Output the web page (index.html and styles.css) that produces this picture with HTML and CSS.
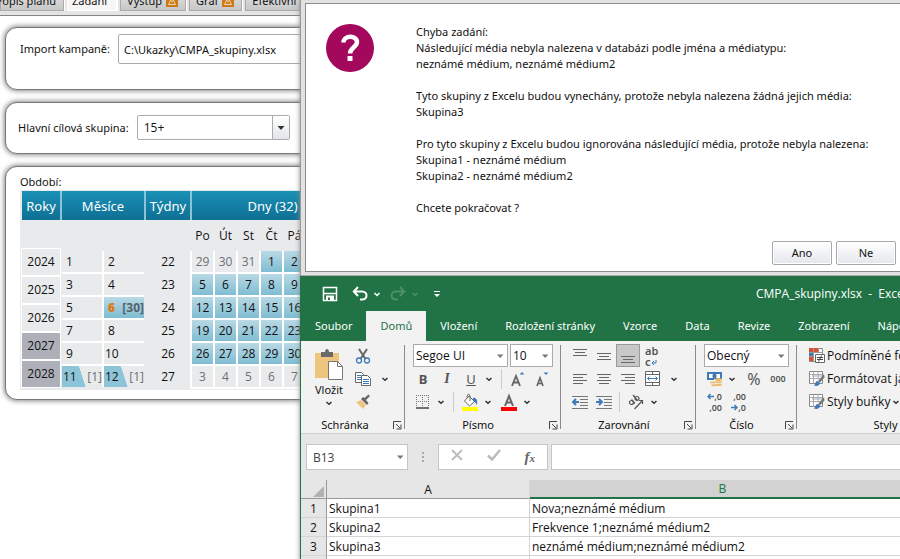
FILE: index.html
```html
<!DOCTYPE html>
<html lang="cs">
<head>
<meta charset="utf-8">
<title>Zadání kampaně</title>
<link rel="stylesheet" href="styles.css">
</head>
<body>
<svg width="0" height="0" class="defs" aria-hidden="true">
  <symbol id="chev" viewBox="0 0 8 8"><path d="M1.500 3 4 5.300 6.500 3" fill="none" stroke="#333" stroke-width="1.500"/></symbol>
  <symbol id="tri" viewBox="0 0 8 8"><path d="M1 2.500h6.500L4.200 6z" fill="#777"/></symbol>
  <symbol id="launch" viewBox="0 0 9 9"><path d="M.5 8V.5H8M3 3l4 4M8 3.500V8H3.500" fill="none" stroke="#444"/></symbol>
  <symbol id="warn" viewBox="0 0 12 12"><path d="M0 0h12v12H0z" fill="#cb7a1a"/><path d="M6 2.500 9.500 9.500h-7zM6 5v2.500" fill="none" stroke="#f3d3a6"/></symbol>
  <symbol id="tablebrush" viewBox="0 0 17 17"><path d="M1.500 1.500h13v12h-13z" fill="#fff" stroke="#888"/><path d="M4 4h10v3H4z" fill="#c9d7e6"/><path d="M1.500 4.500h13M1.500 8.500h13M5.500 1.500v12M10 1.500v8" fill="none" stroke="#aaa"/><path d="m16 4-6 7 2 1.500 4.500-5z" fill="#777"/><path d="M9.500 11c-2 0-2 3-3.500 4.500 3 1 6 0 6-3z" fill="#3f7ab8"/></symbol>
</svg>
<div class="desktop">
  <main class="app">
    <nav class="tabs">
      <a class="tab first" href="#">Popis plánu</a>
      <a class="tab active" href="#">Zadání</a>
      <a class="tab" href="#">Výstup <svg class="warn"><use href="#warn"/></svg></a>
      <a class="tab" href="#">Graf <svg class="warn"><use href="#warn"/></svg></a>
      <a class="tab" href="#">Efektivní re</a>
    </nav>
    <section class="panel import">
      <label for="path">Import kampaně:</label>
      <input id="path" class="path" value="C:\Ukazky\CMPA_skupiny.xlsx">
    </section>
    <section class="panel target">
      <label for="group">Hlavní cílová skupina:</label>
      <span class="combo big"><select id="group"><option>15+</option></select><span class="drop"><svg width="10" height="10" viewBox="0 0 10 10"><path d="M1.500 3h7L5 7z" fill="#333"/></svg></span></span>
    </section>
    <section class="panel period">
      <div class="period-title">Období:</div>
      <div class="calendar">
        <div class="col years"><h2>Roky</h2><div class="sub short"></div>
          <button>2024</button><button>2025</button><button>2026</button><button class="off">2027</button><button class="off">2028</button>
        </div>
        <div class="col months"><h2>Měsíce</h2><div class="sub"></div>
          <div class="month-grid">
            <button>1</button><button>2</button><button>3</button><button>4</button><button>5</button>
            <button class="sel"><b>6</b><span>[30]</span></button>
            <button>7</button><button>8</button><button>9</button><button class="wide">10</button>
            <button class="part">11<span>[1]</span></button><button class="part">12<span>[1]</span></button>
          </div>
        </div>
        <div class="col weeks"><h2>Týdny</h2><div class="sub"></div>
          <button>22</button><button>23</button><button>24</button><button>25</button><button>26</button><button>27</button>
        </div>
        <div class="col days"><h2>Dny (32)</h2>
          <table>
            <thead><tr><th>Po</th><th>Út</th><th>St</th><th>Čt</th><th>Pá</th></tr></thead>
            <tbody>
              <tr><td class="out">29</td><td class="out">30</td><td class="out">31</td><td>1</td><td>2</td></tr>
              <tr><td>5</td><td>6</td><td>7</td><td>8</td><td>9</td></tr>
              <tr><td>12</td><td>13</td><td>14</td><td>15</td><td>16</td></tr>
              <tr><td>19</td><td>20</td><td>21</td><td>22</td><td>23</td></tr>
              <tr><td>26</td><td>27</td><td>28</td><td>29</td><td>30</td></tr>
              <tr><td class="out">3</td><td class="out">4</td><td class="out">5</td><td class="out">6</td><td class="out">7</td></tr>
            </tbody>
          </table>
        </div>
      </div>
    </section>
  </main>

  <div class="front">
    <section class="dialog" role="dialog" aria-label="Chyba zadání">
      <div class="dialog-inner">
        <div class="message">
          <svg class="question" width="48" height="48" viewBox="0 0 48 48"><circle cx="24" cy="24" r="24" fill="#a3085c"/><path d="M17.500 18.500c0-7.500 13.500-7.500 13.500-.5 0 5-7 5.500-7 11.500" fill="none" stroke="#fff" stroke-width="4.500"/><path d="M21.500 32h5v5h-5z" fill="#fff"/></svg>
          <div class="lines">
            <p>Chyba zadání:<br>Následující média nebyla nalezena v databázi podle jména a médiatypu:<br>neznámé médium, neznámé médium2</p>
            <p>Tyto skupiny z Excelu budou vynechány, protože nebyla nalezena žádná jejich média:<br>Skupina3</p>
            <p>Pro tyto skupiny z Excelu budou ignorována následující média, protože nebyla nalezena:<br>Skupina1 - neznámé médium<br>Skupina2 - neznámé médium2</p>
            <p>Chcete pokračovat ?</p>
          </div>
        </div>
        <div class="actions"><button>Ano</button><button>Ne</button></div>
      </div>
    </section>

    <section class="excel">
      <header class="titlebar">
        <button aria-label="Uložit"><svg width="16" height="16" viewBox="0 0 16 16"><path d="M1.500 1.500h13v13h-13z" fill="none" stroke="#fff" stroke-width="1.500"/><path d="M4 9.500h8V15H4z" fill="#fff"/><path d="M6 11.500h2V14H6z" fill="#217346"/><path d="M2 7.500h12" stroke="#fff" stroke-width="1.500"/></svg></button>
        <button class="undo" aria-label="Zpět"><svg width="16" height="16" viewBox="0 0 16 16"><path d="M2 5.500h8c6 0 6 8 0 8H8M6 1 1.800 5.500 6 10" fill="none" stroke="#fff" stroke-width="2"/></svg><svg class="c" width="8" height="8" viewBox="0 0 8 8"><path d="M1.500 3 4 5.500 6.500 3" fill="none" stroke="#fff" stroke-width="1.500"/></svg></button>
        <button class="redo" aria-label="Znovu"><svg width="16" height="16" viewBox="0 0 16 16"><path d="M14 5.500H6c-6 0-6 8 0 8h2M10 1l4.200 4.500L10 10" fill="none" stroke="#4d9068" stroke-width="2"/></svg><svg class="c" width="8" height="8" viewBox="0 0 8 8"><path d="M1.500 3 4 5.500 6.500 3" fill="none" stroke="#4d9068" stroke-width="1.500"/></svg></button>
        <button class="more" aria-label="Přizpůsobit"><svg width="8" height="8" viewBox="0 0 8 8"><path d="M1 1.500h6" stroke="#fff"/><path d="M1 4h6L4 7z" fill="#fff"/></svg></button>
        <span class="title">CMPA_skupiny.xlsx&nbsp; -&nbsp; Excel</span>
      </header>
      <nav class="ribbon-tabs">
        <a href="#">Soubor</a><a href="#" class="active">Domů</a><a href="#">Vložení</a><a href="#">Rozložení stránky</a><a href="#">Vzorce</a><a href="#">Data</a><a href="#">Revize</a><a href="#">Zobrazení</a><a href="#">Nápověda</a>
      </nav>
      <div class="ribbon">
        <div class="group clipboard">
          <div class="clip-body">
            <button class="paste">
              <svg width="30" height="32" viewBox="0 0 30 32"><path d="M1 4h24v25H1z" fill="#edc57c"/><path d="M7 3h4c0-4 4-4 4 0h4v5H7z" fill="#6a6a6a"/><path d="M14.500 12.500h9l5 5v13h-14z" fill="#fff" stroke="#777"/><path d="M23.500 12.500v5h5" fill="none" stroke="#777"/></svg>
              <span>Vložit</span><svg width="8" height="8"><use href="#chev"/></svg>
            </button>
            <div class="clip-side">
              <div class="row"><button class="tool" aria-label="Vyjmout"><svg width="16" height="16" viewBox="0 0 16 16"><path d="m4 1 6.500 10M12 1 5.500 11" stroke="#666" stroke-width="2"/><circle cx="4" cy="12.500" r="2.500" fill="none" stroke="#3f7ab8" stroke-width="1.300"/><circle cx="12" cy="12.500" r="2.500" fill="none" stroke="#3f7ab8" stroke-width="1.300"/></svg></button></div>
              <div class="row"><button class="tool" aria-label="Kopírovat"><svg width="16" height="16" viewBox="0 0 16 16"><path d="M.5 1.500h6l2 2v8h-8z" fill="#fff" stroke="#666"/><path d="M2 4.500h4M2 6.500h4M2 8.500h4" stroke="#3f7ab8"/><path d="M6.500 4.500h6l3 3v7h-9z" fill="#fff" stroke="#666"/><path d="M8 8.500h6M8 10.500h6M8 12.500h6" stroke="#3f7ab8"/></svg></button><button class="ch" aria-label="Možnosti kopírování"><svg width="8" height="8"><use href="#chev"/></svg></button></div>
              <div class="row"><button class="tool" aria-label="Kopírovat formát"><svg width="16" height="16" viewBox="0 0 16 16"><path d="m1 8 5-2 5 5-3 4z" fill="#edc57c"/><path d="m6 5 6 6 1.500-2L11 6l4-4-1.500-1.500L9.500 4 8 3z" fill="#666"/></svg></button></div>
            </div>
          </div>
          <div class="caption">Schránka<svg class="launch"><use href="#launch"/></svg></div>
        </div>

        <div class="group font">
          <div class="row">
            <span class="combo face"><select aria-label="Písmo"><option>Segoe UI</option></select><svg class="arrow"><use href="#tri"/></svg></span>
            <span class="combo size"><select aria-label="Velikost písma"><option>10</option></select><svg class="arrow"><use href="#tri"/></svg></span>
          </div>
          <div class="row">
            <button class="tool letter"><b>B</b></button><button class="tool letter serif"><i>I</i></button><button class="tool letter"><u>U</u></button><button class="ch" aria-label="Podtržení"><svg width="8" height="8"><use href="#chev"/></svg></button><i class="sep"></i>
            <button class="tool" aria-label="Zvětšit písmo"><svg width="16" height="16" viewBox="0 0 16 16"><path d="m2 15 4-10 4 10M3.500 11.500h5" fill="none" stroke="#666" stroke-width="1.800"/><path d="M9.500 3.500h5L12 1z" fill="#3f7ab8"/></svg></button>
            <button class="tool" aria-label="Zmenšit písmo"><svg width="16" height="16" viewBox="0 0 16 16"><path d="m3 15 3-8 3 8M4 12.500h4" fill="none" stroke="#666" stroke-width="1.700"/><path d="M9.500 1.500h5L12 4z" fill="#3f7ab8"/></svg></button>
          </div>
          <div class="row">
            <button class="tool" aria-label="Ohraničení"><svg width="14" height="14" viewBox="0 0 14 14"><path d="M0 .5h14M0 6.500h14M.5 0v12M6.500 0v12M12.500 0v12" stroke="#777" stroke-dasharray="1 1"/><path d="M0 13h13" stroke="#444" stroke-width="1.500"/></svg></button><button class="ch" aria-label="Možnosti ohraničení"><svg width="8" height="8"><use href="#chev"/></svg></button><i class="sep"></i>
            <button class="tool" aria-label="Barva výplně"><svg width="16" height="18" viewBox="0 0 16 18"><path d="m7 3 5.500 5.500L7.500 13 2.500 8z" fill="#fff" stroke="#666"/><path d="M5 5c0-5 3-5 3-1v4" fill="none" stroke="#666"/><path d="M11 5c3-1 5 2 4 7-1-1-1-3-4-4z" fill="#3f7ab8"/><path d="M0 14h16v4H0z" fill="#ff0"/></svg></button><button class="ch" aria-label="Barvy výplně"><svg width="8" height="8"><use href="#chev"/></svg></button>
            <button class="tool color" aria-label="Barva písma"><svg width="16" height="18" viewBox="0 0 16 18"><path d="m4 13 4-10 4 10M5.500 9.500h5" fill="none" stroke="#666" stroke-width="2"/><path d="M0 14h16v4H0z" fill="#f00"/></svg></button><button class="ch" aria-label="Barvy písma"><svg width="8" height="8"><use href="#chev"/></svg></button>
          </div>
          <div class="caption">Písmo<svg class="launch"><use href="#launch"/></svg></div>
        </div>

        <div class="group align">
          <div class="row">
            <button class="tool" aria-label="Nahoru"><svg width="14" height="16" viewBox="0 0 14 16"><path d="M0 1.500h14M2 4.500h10M0 7.500h14" stroke="#666"/></svg></button>
            <button class="tool" aria-label="Na střed svisle"><svg width="14" height="16" viewBox="0 0 14 16"><path d="M0 5.500h14M2 8.500h10M0 11.500h14" stroke="#666"/></svg></button>
            <button class="tool pressed" aria-label="Dolů"><svg width="14" height="16" viewBox="0 0 14 16"><path d="M0 8.500h14M2 11.500h10M0 14.500h14" stroke="#666"/></svg></button>
            <button class="tool wrap" aria-label="Zalamovat text"><span>ab</span><span>c<svg width="6" height="6" viewBox="0 0 6 6"><path d="M5 0v3H1M3 1 1 3l2 2" fill="none" stroke="#3f7ab8"/></svg></span></button>
          </div>
          <div class="row">
            <button class="tool" aria-label="Vlevo"><svg width="14" height="12" viewBox="0 0 14 12"><path d="M0 1.500h14M0 4.500h10M0 7.500h14M0 10.500h10" stroke="#666"/></svg></button>
            <button class="tool" aria-label="Na střed"><svg width="14" height="12" viewBox="0 0 14 12"><path d="M0 1.500h14M2 4.500h10M0 7.500h14M2 10.500h10" stroke="#666"/></svg></button>
            <button class="tool" aria-label="Vpravo"><svg width="14" height="12" viewBox="0 0 14 12"><path d="M0 1.500h14M4 4.500h10M0 7.500h14M4 10.500h10" stroke="#666"/></svg></button>
            <button class="tool" aria-label="Sloučit"><svg width="15" height="15" viewBox="0 0 15 15"><path d="M.5.5h14v14H.5zM.5 3.500h14M.5 11.500h14M7.500 0v3.500M7.500 11.500V15" fill="#fff" stroke="#666"/><path d="M2.500 7.500h10M4.500 5.500l-2 2 2 2M10.500 5.500l2 2-2 2" fill="none" stroke="#3f7ab8"/></svg></button><button class="ch far" aria-label="Možnosti sloučení"><svg width="8" height="8"><use href="#chev"/></svg></button>
          </div>
          <div class="row">
            <button class="tool" aria-label="Zmenšit odsazení"><svg width="16" height="14" viewBox="0 0 16 14"><path d="M0 1.500h16M8 4.500h8M8 7.500h8M8 10.500h8M0 13.500h16" stroke="#777"/><path d="M1 7h6M4 4 1 7l3 3" fill="none" stroke="#3f7ab8" stroke-width="2"/></svg></button>
            <button class="tool" aria-label="Zvětšit odsazení"><svg width="16" height="14" viewBox="0 0 16 14"><path d="M0 1.500h16M8 4.500h8M8 7.500h8M8 10.500h8M0 13.500h16" stroke="#777"/><path d="M0 7h6M3 4l3 3-3 3" fill="none" stroke="#3f7ab8" stroke-width="2"/></svg></button><i class="sep near"></i>
            <button class="tool" aria-label="Orientace"><svg width="16" height="16" viewBox="0 0 16 16"><g fill="none" stroke="#555" stroke-width="1.200"><circle cx="3.500" cy="8.500" r="2"/><path d="m3.500 5.500 3.500 4M5 1l4.500 5.500"/><circle cx="9" cy="4.500" r="2"/><path d="m6.500 15 8-8.500M11 6.500h3.500V10"/></g></svg></button><button class="ch" aria-label="Možnosti orientace"><svg width="8" height="8"><use href="#chev"/></svg></button>
          </div>
          <div class="caption">Zarovnání<svg class="launch"><use href="#launch"/></svg></div>
        </div>

        <div class="group number">
          <div class="row"><span class="combo format"><select aria-label="Formát čísla"><option>Obecný</option></select><svg class="arrow"><use href="#tri"/></svg></span></div>
          <div class="row">
            <button class="tool" aria-label="Měna"><svg width="17" height="16" viewBox="0 0 17 16"><path d="M1 1h15v8H1z" fill="#3f7ab8"/><path d="M3 3h11v4H3z" fill="#fff"/><circle cx="8.500" cy="5" r="2.200" fill="#3f7ab8"/><path d="M8 8h8v7H8zM4 11h7v4H4z" fill="#f2f2f2"/><g fill="#edb96a"><ellipse cx="12.500" cy="8.500" rx="3.500" ry="1.500"/><ellipse cx="12.500" cy="11.300" rx="3.500" ry="1"/><ellipse cx="12.500" cy="14" rx="3.500" ry="1"/><ellipse cx="7" cy="11.500" rx="3" ry="1"/><ellipse cx="8" cy="14.300" rx="3" ry="1"/></g></svg></button><button class="ch" aria-label="Možnosti měny"><svg width="8" height="8"><use href="#chev"/></svg></button>
            <button class="tool percent">%</button><button class="tool zeros">000</button>
          </div>
          <div class="row">
            <button class="tool dec"><span><svg width="7" height="7" viewBox="0 0 7 7"><path d="M1 3.500h6M3.500 1 1 3.500 3.500 6" fill="none" stroke="#3f7ab8" stroke-width="1.500"/></svg>,0</span><span>,00</span></button>
            <button class="tool dec"><span>,00</span><span><svg width="7" height="7" viewBox="0 0 7 7"><path d="M0 3.500h6M3.500 1 6 3.500 3.500 6" fill="none" stroke="#3f7ab8" stroke-width="1.500"/></svg>,0</span></button>
          </div>
          <div class="caption">Číslo<svg class="launch"><use href="#launch"/></svg></div>
        </div>

        <div class="group styles">
          <div class="row"><button class="named"><svg width="17" height="17" viewBox="0 0 17 17"><path d="M1.500 1.500h13v13h-13z" fill="#fff" stroke="#888"/><path d="M1 1h9v4H1zM1 10h5v4H1z" fill="#d8502f"/><path d="M1 6h4v3H1z" fill="#3f7ab8"/><path d="M5.500 1v14M10.500 1v5M1 5.500h14M1 9.500h5" stroke="#999"/><path d="M7.500 7.500h9v8h-9z" fill="#fff" stroke="#666"/><path d="M9 10.500h6M9 12.500h6M13.500 8.500l-3 6" stroke="#444"/></svg>Podmíněné formátování</button></div>
          <div class="row"><button class="named"><svg width="17" height="17"><use href="#tablebrush"/></svg>Formátovat jako tabulku</button></div>
          <div class="row"><button class="named"><svg width="17" height="17"><use href="#tablebrush"/></svg>Styly buňky<svg width="8" height="8"><use href="#chev"/></svg></button></div>
          <div class="caption">Styly</div>
        </div>
      </div>

      <div class="formula">
        <span class="combo name"><input aria-label="Pole názvů" value="B13"><svg class="arrow"><use href="#tri"/></svg></span>
        <svg class="dots" width="2" height="12" viewBox="0 0 2 12"><path d="M0 1h2v2H0zM0 5h2v2H0zM0 9h2v2H0z" fill="#aaa"/></svg>
        <div class="fx">
          <button aria-label="Zrušit"><svg width="12" height="12" viewBox="0 0 12 12"><path d="m1 1 10 10M11 1 1 11" stroke="#bbb" stroke-width="1.800"/></svg></button>
          <button aria-label="Zadat"><svg width="14" height="12" viewBox="0 0 14 12"><path d="m1 6.500 4 4L13 1" fill="none" stroke="#bbb" stroke-width="2.500"/></svg></button>
          <button class="fn">f<small>x</small></button>
        </div>
        <input class="entry" aria-label="Řádek vzorců">
      </div>
      <table class="sheet">
        <colgroup><col class="c0"><col class="c1"><col class="c2"></colgroup>
        <thead><tr><th class="corner"><svg width="11" height="11" viewBox="0 0 11 11"><path d="M11 0v11H0z" fill="#b2b2b2"/></svg></th><th>A</th><th class="current">B</th></tr></thead>
        <tbody>
          <tr><th>1</th><td>Skupina1</td><td>Nova;neznámé médium</td></tr>
          <tr><th>2</th><td>Skupina2</td><td>Frekvence 1;neznámé médium2</td></tr>
          <tr><th>3</th><td>Skupina3</td><td>neznámé médium;neznámé médium2</td></tr>
          <tr><th></th><td></td><td></td></tr>
        </tbody>
      </table>
    </section>
  </div>
</div>
</body>
</html>
```

FILE: styles.css
```css
* { box-sizing: border-box; }

body {
  margin: 0;
  background: #fff;
  color: #111;
  font: 11px/16px "Noto Sans", "Open Sans", sans-serif;
  overflow: hidden;
}

button, input, select { font: inherit; color: inherit; }
button { padding: 0; border: 0; background: none; white-space: nowrap; }
a { color: inherit; text-decoration: none; }
svg { flex: none; }
.defs { position: absolute; }

.desktop {
  display: grid;
  grid-template-columns: 300px minmax(0, 1fr);
  height: 100vh;
}

/* Planning application */
.app { overflow: hidden; white-space: nowrap; }

.tabs {
  display: flex;
  align-items: flex-end;
  gap: 3px;
  height: 16px;
  padding-bottom: 4px;
  overflow: hidden;
  background: #e4e4e4;
  border-bottom: 1px solid #858585;
}

.tab {
  display: flex;
  align-items: center;
  gap: 4px;
  flex: none;
  height: 20px;
  padding: 0 7px 0 6px;
  background: linear-gradient(#e6e6e6, #c6c6c6);
  border: 1px solid #aaa;
  border-top: 0;
  box-shadow: 1px 0 #fff;
}

.tab.first { width: 64px; justify-content: flex-end; }
.tab.active { background: #f6f6f6; border-color: #fff; padding: 0 9px 0 4px; }
.warn { width: 12px; height: 12px; }

.panel {
  width: 400px;
  margin: 12px 0 0 5px;
  border: 1px solid #777;
  border-radius: 12px;
  background: #fff;
  box-shadow: 0 0 5px 1px #888;
}

.panel.import { display: flex; align-items: flex-start; gap: 8px; height: 63px; margin-top: 11px; padding: 6px 0 0 14px; }
.import label { line-height: 30px; }

.path {
  width: 300px;
  height: 30px;
  padding: 0 5px;
  border: 1px solid #aaa;
  border-radius: 2px;
}

.panel.target { display: flex; align-items: flex-start; gap: 8px; height: 52px; padding: 12px 0 0 12px; }
.target label { line-height: 25px; }

.combo {
  display: flex;
  align-items: center;
  background: #fff;
  border: 1px solid #ababab;
  font-size: 12px;
  font-family: "Open Sans", "Noto Sans", sans-serif;
}

.combo select, .combo input {
  flex: 1;
  min-width: 0;
  height: 100%;
  padding: 0 2px;
  border: 0;
  background: none;
  appearance: none;
  outline: 0;
}

.arrow { width: 8px; height: 8px; margin-right: 3px; }
.combo.big { width: 153px; height: 25px; border-radius: 2px; }
.combo.big select { padding-left: 6px; }

.drop {
  display: flex;
  align-items: center;
  justify-content: center;
  width: 17px;
  height: 100%;
  border-left: 1px solid #aaa;
  background: linear-gradient(#fff, #e2e6ea);
}

.panel.period { padding: 7px 14px 9px; }

.calendar {
  display: flex;
  width: 334px;
  gap: 2px;
  padding: 1px 0 1px 2px;
  background: #e9eaec;
  font-size: 12px;
  font-family: "Open Sans", "Noto Sans", sans-serif;
}

.calendar button { display: block; height: 21px; background: #e9eaec; line-height: 21px; }

.col h2 {
  height: 29px;
  margin: 0;
  background: linear-gradient(#1990b5, #0f6f94);
  box-shadow: 2px 0 #8cc3d6;
  color: #fff;
  font: 13px/31px "Noto Sans", "Open Sans", sans-serif;
  text-align: center;
}

.sub { height: 31px; }
.sub.short { height: 29px; }
.years { width: 38px; }
.years button { width: 38px; height: 26px; margin-bottom: 2px; line-height: 26px; box-shadow: 0 0 0 1px #fff; }
.calendar .years .off { background: #adb0b9; }
.months { width: 82px; }
.month-grid { display: grid; grid-template-columns: 40px 40px; gap: 2px; background: #fff; }
.calendar .months button { display: flex; justify-content: space-between; padding-left: 4px; text-align: left; }
.calendar .months .wide { padding-left: 1px; }
.calendar .months .sel { background: linear-gradient(#b9d9e5, #7fbdd2); color: #56616a; font-weight: 700; }
.sel b { color: #dd7a16; }
.calendar .months .part { padding-left: 1px; background: linear-gradient(72deg, #8cc5d8 0 50%, #e9eaec 51%); }
.part span { color: #6c6f76; }
.weeks { width: 44px; }
.weeks button { width: 44px; margin-bottom: 2px; }
.days { width: 161px; }
.days table { margin-left: -2px; border-spacing: 2px 2px; table-layout: fixed; width: 117px; background: #fff; }
.days th { height: 27px; padding: 0; font-weight: 400; background: #e9eaec; box-shadow: 0 0 0 2px #e9eaec; }
.days td { height: 21px; padding: 0; line-height: 21px; text-align: center; background: linear-gradient(#b9d9e5, #7fbdd2); }
.days .out { background: #e9eaec; color: #6c6f76; }

/* Windows in front */
.front { position: relative; min-width: 0; box-shadow: 0 0 5px #888; }

.dialog {
  padding: 3px 0 3px 4px;
  background: #e2e2e2;
  border-left: 1px solid #999;
  border-bottom: 1px solid #aaa;
}

.dialog-inner {
  height: 269px;
  display: flex;
  flex-direction: column;
  justify-content: space-between;
  border: 1px solid #8d8b8d;
  border-right: 0;
  background: #fff;
  padding: 20px 4px 6px 20px;
}

.message { display: flex; gap: 42px; white-space: nowrap; }
.lines p { margin: 0 0 16px; }
.actions { display: flex; justify-content: flex-end; gap: 4px; }

.actions button {
  width: 60px;
  height: 24px;
  border: 1px solid #a8a8a8;
  border-radius: 2px;
  background: linear-gradient(#fff, #e3e7eb);
  box-shadow: inset 0 0 0 1px #fff;
}

/* Spreadsheet */
.excel { border-left: 1px solid #217346; background: #fff; overflow: hidden; white-space: nowrap; }

.titlebar {
  display: flex;
  align-items: center;
  height: 35px;
  padding-left: 21px;
  background: #217346;
  color: #fff;
}

.titlebar button { display: flex; align-items: center; gap: 5px; }
.titlebar .undo { margin-left: 14px; }
.titlebar .redo { margin-left: 9px; }
.titlebar .more { margin-left: 14px; }
.titlebar .title { margin-left: 315px; font-size: 12px; font-family: "Open Sans", "Noto Sans", sans-serif; }

.ribbon-tabs { display: flex; height: 30px; background: #217346; color: #fff; line-height: 30px; }
.ribbon-tabs a { padding: 0 14px; }
.ribbon-tabs .active { background: #f2f2f2; color: #217346; }

.ribbon {
  display: flex;
  height: 93px;
  background: #f2f2f2;
  border-bottom: 1px solid #cfcfcf;
}

.group {
  position: relative;
  flex: none;
  padding: 3px 0 0 6px;
  background: linear-gradient(#8a8a8a, #8a8a8a) right 0 top 4px / 1px 84px no-repeat;
}

.clipboard { width: 104px; padding-left: 0; }
.font { width: 156px; }
.align { width: 135px; padding-left: 7px; }
.number { width: 101px; }
.styles { width: 182px; padding-left: 11px; }
.row { display: flex; align-items: center; height: 23px; }
.caption { height: 20px; padding-top: 3px; line-height: 18px; text-align: center; margin-right: 16px; }
.launch { position: absolute; right: 3px; bottom: 3px; width: 9px; height: 9px; }

.tool { display: flex; align-items: center; justify-content: center; width: 24px; height: 23px; color: #555; flex: none; }
.ch { display: flex; align-items: center; justify-content: center; width: 12px; height: 23px; flex: none; }
.ch.far { margin-left: 4px; }
.pressed { background: #c8c8c8; border: 1px solid #999; }
.sep { width: 1px; height: 20px; margin: 0 4px 0 6px; background: #ccc; }
.sep.near { margin: 0 4px 0 3px; }
.color { margin-left: 3px; }

.clip-body { display: flex; }
.paste { display: flex; flex-direction: column; align-items: center; gap: 1px; width: 50px; padding: 5px 0 0 6px; }
.clip-side .ch { margin-left: 4px; }
.combo.face { width: 95px; height: 23px; margin-left: 2px; }
.combo.size { width: 43px; height: 23px; margin-left: 2px; }
.combo.format { width: 85px; height: 23px; margin-left: 2px; }
.letter { font-size: 13px; }
.letter.serif { font-family: "Liberation Serif", serif; font-size: 14px; font-weight: 700; }
.wrap { flex-direction: column; line-height: 11px; font-size: 11px; align-items: flex-start; padding-left: 5px; font-weight: 600; }
.percent { margin-left: 4px; font-size: 16px; }
.zeros { font-size: 9px; font-weight: 600; }
.dec { flex-direction: column; align-items: flex-end; padding-right: 4px; font-size: 9px; line-height: 11px; font-weight: 600; }
.named { display: flex; align-items: center; gap: 2px; font-size: 12px; font-family: "Open Sans", "Noto Sans", sans-serif; }

.formula {
  display: flex;
  align-items: center;
  height: 46px;
  padding: 0 0 0 5px;
  background: #e6e6e6;
}

.combo.name { width: 102px; height: 26px; border-color: #c6c6c6; }
.combo.name input { padding-left: 6px; color: #444; }
.dots { margin: 0 14px; }
.fx { display: flex; align-items: center; justify-content: space-around; width: 110px; height: 26px; border: 1px solid #c6c6c6; background: #fff; }
.fn { font: italic 700 15px/16px "Liberation Serif", serif; color: #666; }
.fn small { font-size: 11px; }
.entry { flex: 1; min-width: 0; height: 26px; margin-left: 3px; border: 1px solid #c6c6c6; border-right: 0; background: #fff; }

.sheet {
  width: 615px;
  table-layout: fixed;
  border-collapse: separate;
  border-spacing: 0;
  font-size: 12px;
  font-family: "Open Sans", "Noto Sans", sans-serif;
}
.c0 { width: 26px; }
.c1 { width: 203px; }
.c2 { width: 386px; }
.sheet th, .sheet td { height: 19px; padding: 2px 2px 0; line-height: 16px; font-weight: 400; border: solid #d4d4d4; border-width: 0 1px 1px 0; }
.sheet th { background: #e6e6e6; }
.sheet th:first-child { border-right-color: #999; }
.sheet thead th { border-bottom-color: #999; }
.sheet thead .current { padding-top: 1px; background: #d2d2d2; border-bottom: 2px solid #217346; color: #217346; }
.corner svg { display: block; margin: 2px 0 0 auto; }
```
